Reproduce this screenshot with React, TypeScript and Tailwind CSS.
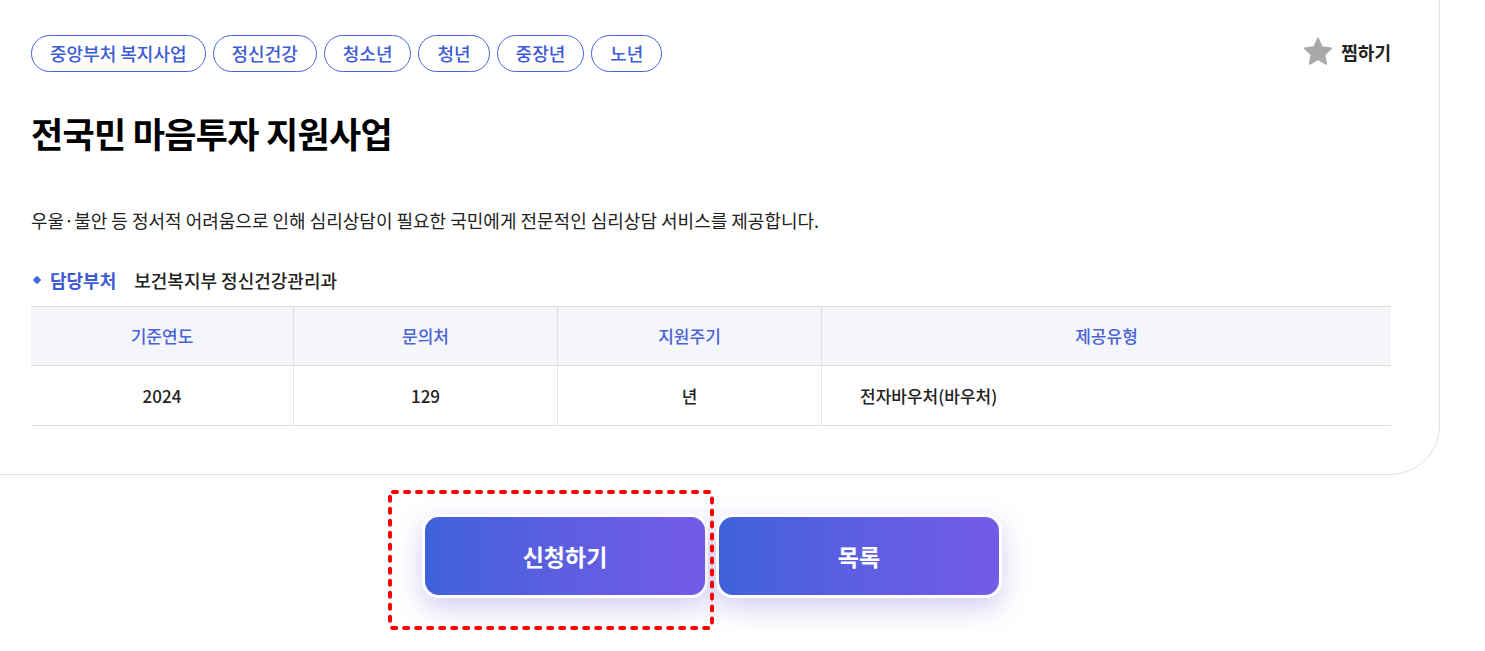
const tags = ['중앙부처 복지사업', '정신건강', '청소년', '청년', '중장년', '노년'];

const cols = [
  { head: '기준연도', value: '2024', align: 'center' },
  { head: '문의처', value: '129', align: 'center' },
  { head: '지원주기', value: '년', align: 'center' },
  { head: '제공유형', value: '전자바우처(바우처)', align: 'left' },
];

function StarIcon() {
  return (
    <svg width="32" height="32" viewBox="0 0 24 24" aria-hidden="true">
      <path
        d="M12 1.8l3.05 6.5 7.05.85-5.2 4.85 1.38 6.98L12 17.5l-6.28 3.48 1.38-6.98-5.2-4.85 7.05-.85z"
        fill="#a9a9a9"
        stroke="#a9a9a9"
        strokeWidth="1.2"
        strokeLinejoin="round"
      />
    </svg>
  );
}

function Card() {
  return (
    <section className="w-[1440px] border-r border-b border-[#e2e2e2] rounded-br-[50px] bg-white pl-[31px] pr-[48px] pt-[35px] pb-[48px]">
      <div className="flex items-start justify-between">
        <ul className="flex gap-[7px]">
          {tags.map((t) => (
            <li
              key={t}
              className="flex h-[37px] items-center rounded-full border border-[#4565dc] px-[18px] text-[18px] font-medium text-[#3d5bd6]"
            >
              {t}
            </li>
          ))}
        </ul>
        <button className="mt-[1px] flex items-center gap-[7px] text-[18px] font-bold text-[#222]">
          <StarIcon />
          찜하기
        </button>
      </div>

      <h1 className="mt-[39px] text-[35px] font-bold leading-[44px] tracking-[-0.02em] text-black">
        전국민 마음투자 지원사업
      </h1>

      <p className="mt-[53px] text-[18px] leading-[24px] text-[#222]">
        우울·불안 등 정서적 어려움으로 인해 심리상담이 필요한 국민에게 전문적인 심리상담 서비스를 제공합니다.
      </p>

      <div className="mt-[36px] flex items-center text-[18px] leading-[24px]">
        <span className="ml-[3px] mr-[10px] h-[6px] w-[6px] rotate-45 bg-[#4565dc]" />
        <span className="font-bold text-[#3d5bd6]">담당부처</span>
        <span className="ml-[18px] font-medium text-[#222]">보건복지부 정신건강관리과</span>
      </div>

      <div className="mt-[14px] grid grid-cols-[263px_264px_264px_1fr] border-t border-b border-[#dedede] text-[17px]">
        {cols.map((c, i) => (
          <div
            key={c.head}
            className={`flex h-[59px] items-center justify-center border-b border-[#dedede] bg-[#f5f6fa] font-medium text-[#4a63d9] ${i < 3 ? 'border-r' : ''}`}
          >
            {c.head}
          </div>
        ))}
        {cols.map((c, i) => (
          <div
            key={c.value}
            className={`flex h-[59px] items-center border-[#e6e6e6] font-medium text-[#222] ${i < 3 ? 'border-r' : ''} ${c.align === 'center' ? 'justify-center' : 'pl-[38px]'}`}
          >
            {c.value}
          </div>
        ))}
      </div>
    </section>
  );
}

function GradientButton({ label }: { label: string }) {
  return (
    <button className="flex h-[84px] w-[286px] items-center justify-center rounded-[17px] border-[3px] border-white bg-gradient-to-r from-[#3f62d8] to-[#745ae8] text-[23px] font-bold text-white shadow-[0_10px_28px_rgba(88,80,200,0.28)]">
      {label}
    </button>
  );
}

export default function App() {
  return (
    <div className="min-h-[651px] bg-white font-['Noto_Sans_CJK_KR','Noto_Sans',sans-serif]">
      <Card />
      <div className="relative mt-[39px] ml-[422px] flex gap-[8px]">
        <GradientButton label="신청하기" />
        <GradientButton label="목록" />
        {/* 강조 표시 (빨간 점선) */}
        <svg
          className="pointer-events-none absolute left-[-34px] top-[-24px]"
          width="326"
          height="140"
          aria-hidden="true"
        >
          <rect
            x="2"
            y="2"
            width="322"
            height="136"
            rx="3"
            fill="none"
            stroke="#ff0000"
            strokeWidth="4"
            strokeDasharray="4 8"
            strokeLinecap="round"
          />
        </svg>
      </div>
    </div>
  );
}
